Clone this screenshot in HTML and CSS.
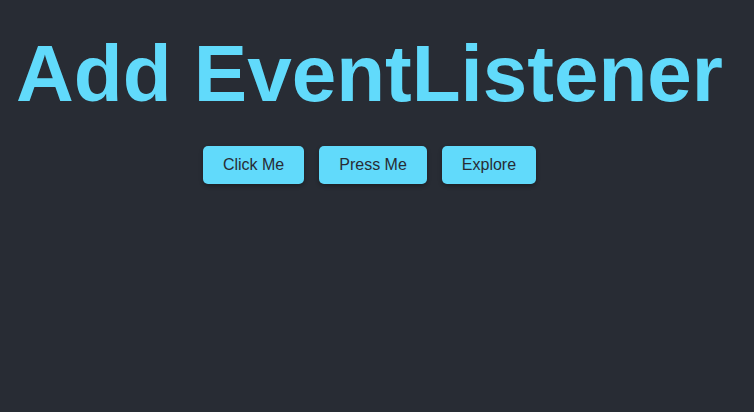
FILE: index.html
```html
<!DOCTYPE html>
<html lang="en">
<head>
<meta charset="utf-8">
<title>Add EventListener</title>
<link rel="stylesheet" href="styles.css">
</head>
<body>
<main class="app">
  <h1 class="title">Add EventListener</h1>
  <div class="actions">
    <button class="btn">Click Me</button>
    <button class="btn">Press Me</button>
    <button class="btn">Explore</button>
  </div>
</main>
</body>
</html>
```

FILE: styles.css
```css
html, body {
  margin: 0;
  padding: 0;
  background: #282c34;
  height: 100%;
}
body {
  font-family: "Liberation Sans", Arial, sans-serif;
}
.app {
  display: flex;
  flex-direction: column;
  align-items: center;
  padding: 28px 15px 0 0;
}
.title {
  margin: 0;
  font-size: 80px;
  font-weight: bold;
  color: #61dafb;
  line-height: 92px;
  white-space: nowrap;
}
.actions {
  display: flex;
  gap: 15px;
  margin-top: 26px;
}
.btn {
  font-family: "Liberation Sans", Arial, sans-serif;
  font-size: 16px;
  line-height: 18px;
  padding: 10px 20px;
  border: none;
  border-radius: 5px;
  background: #61dafb;
  color: #282c34;
  box-shadow: 0 2px 4px rgba(0, 0, 0, 0.3);
  cursor: pointer;
}
```
